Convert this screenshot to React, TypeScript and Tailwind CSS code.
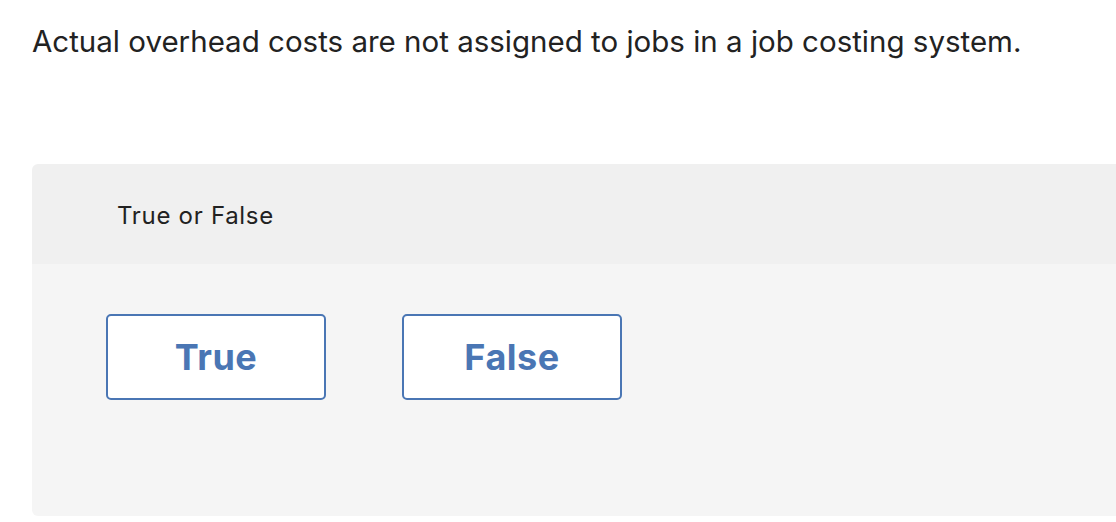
export default function App() {
  return (
    <div className="w-[1116px] h-[522px] overflow-hidden bg-white font-['Inter',sans-serif]">
      <div className="pl-8 pt-[21px]">
        <h1 className="text-[29.5px] leading-[40px] text-[#222222] font-normal">
          Actual overhead costs are not assigned to jobs in a job costing system.
        </h1>

        <div className="mt-[103px] w-[1100px] rounded-md overflow-hidden">
          <div className="h-[100px] bg-[#f0f0f0] flex items-center pl-[85px] pt-[4px]">
            <span className="text-[24px] tracking-[0.7px] text-[#222222]">True or False</span>
          </div>
          <div className="h-[252px] bg-[#f5f5f5] pt-[50px] pl-[74px] flex gap-[76px] items-start">
            <button className="w-[220px] h-[86px] bg-white border-2 border-[#4a76b4] rounded-[5px] text-[#4a76b4] text-[36px] tracking-[0.5px] font-bold">
              True
            </button>
            <button className="w-[220px] h-[86px] bg-white border-2 border-[#4a76b4] rounded-[5px] text-[#4a76b4] text-[36px] tracking-[0.5px] font-bold">
              False
            </button>
          </div>
        </div>
      </div>
    </div>
  )
}
